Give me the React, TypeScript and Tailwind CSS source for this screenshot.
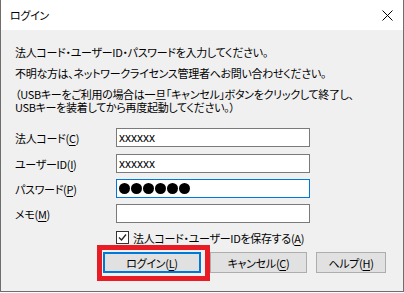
import React from 'react';

const jp = "font-['Noto_Sans_CJK_JP',sans-serif] [font-feature-settings:'palt'] tracking-[-0.3px]";

const Field = ({
  label,
  keyChar,
  children,
  focused = false,
  className = '',
}: {
  label: string;
  keyChar: string;
  children?: React.ReactNode;
  focused?: boolean;
  className?: string;
}) => (
  <div className={`flex items-center h-[19px] ${className}`}>
    <div className="w-[101px] text-[11px] leading-[12px] text-black">
      {label}(<span className="underline underline-offset-2">{keyChar}</span>)
    </div>
    <div
      className={`w-[194px] h-[19px] bg-white border flex items-center pl-[2px] ${
        focused ? 'border-[#0078d7]' : 'border-[#7a7a7a]'
      }`}
    >
      {children}
    </div>
  </div>
);

const Btn = ({
  label,
  keyChar,
  className = '',
}: {
  label: string;
  keyChar: string;
  className?: string;
}) => (
  <button
    className={`h-[21px] bg-[#e1e1e1] flex items-center justify-center text-[11px] leading-[12px] text-black ${className}`}
  >
    {label}(<span className="underline underline-offset-2">{keyChar}</span>)
  </button>
);

const App = () => {
  return (
    <div className={`relative w-[404px] h-[293px] bg-white overflow-hidden ${jp}`}>
      <div className="h-[292px] border border-t-0 border-[#6e6e6e] flex flex-col">
        {/* title bar */}
        <div className="h-[30px] bg-white flex items-center justify-between pl-[9px] pr-[10px]">
          <span className="text-[11px] text-black">ログイン</span>
          <svg width="11" height="11" viewBox="0 0 11 11" className="mt-[1px]">
            <path d="M0.5 0.5 L10.5 10.5 M10.5 0.5 L0.5 10.5" stroke="#000" strokeWidth="1" />
          </svg>
        </div>

        {/* body */}
        <div className="flex-1 bg-[#f0f0f0] pl-[14px] flex flex-col text-[11px] text-black">
          <p className="mt-[16px] leading-[12px]">法人コード・ユーザーID・パスワードを入力してください。</p>
          <p className="mt-[9px] leading-[12px]">不明な方は、ネットワークライセンス管理者へお問い合わせください。</p>
          <p className="mt-[9px] leading-[13px]">
            （USBキーをご利用の場合は一旦「キャンセル」ボタンをクリックして終了し、
            <br />
            USBキーを装着してから再度起動してください。）
          </p>

          <Field label="法人コード" keyChar="C" className="mt-[14px]">
            <span className="font-['Liberation_Sans',sans-serif] tracking-normal text-[12px] leading-[12px]">xxxxxx</span>
          </Field>
          <Field label="ユーザーID" keyChar="I" className="mt-[7px]">
            <span className="font-['Liberation_Sans',sans-serif] tracking-normal text-[12px] leading-[12px]">xxxxxx</span>
          </Field>
          <Field label="パスワード" keyChar="P" focused className="mt-[6px]">
            <div className="flex gap-[1px]">
              {[0, 1, 2, 3, 4, 5].map((i) => (
                <span key={i} className="w-[11px] h-[11px] rounded-full bg-black" />
              ))}
            </div>
          </Field>
          <Field label="メモ" keyChar="M" className="mt-[6px]" />

          {/* remember checkbox */}
          <div className="mt-[8px] ml-[101px] flex items-center h-[13px]">
            <div className="w-[13px] h-[13px] border border-[#333333] bg-white flex items-center justify-center">
              <svg width="9" height="9" viewBox="0 0 9 9">
                <path d="M1 4.5 L3.5 7 L8 1.5" fill="none" stroke="#222" strokeWidth="1.3" />
              </svg>
            </div>
            <span className="ml-[4px] leading-[12px]">
              法人コード・ユーザーIDを保存する(<span className="underline underline-offset-2">A</span>)
            </span>
          </div>

          {/* buttons */}
          <div className="mt-[8px] ml-[88px] flex">
            <Btn label="ログイン" keyChar="L" className="w-[98px] border-2 border-[#0078d7]" />
            <Btn label="キャンセル" keyChar="C" className="w-[97px] ml-[9px] border border-[#adadad]" />
            <Btn label="ヘルプ" keyChar="H" className="w-[70px] ml-[9px] border border-[#adadad]" />
          </div>
        </div>
      </div>

      {/* red annotation frame */}
      <div className="absolute left-[97px] top-[245px] w-[113px] h-[36px] border-[5px] border-[#e81c24]" />
    </div>
  );
};

export default App;
